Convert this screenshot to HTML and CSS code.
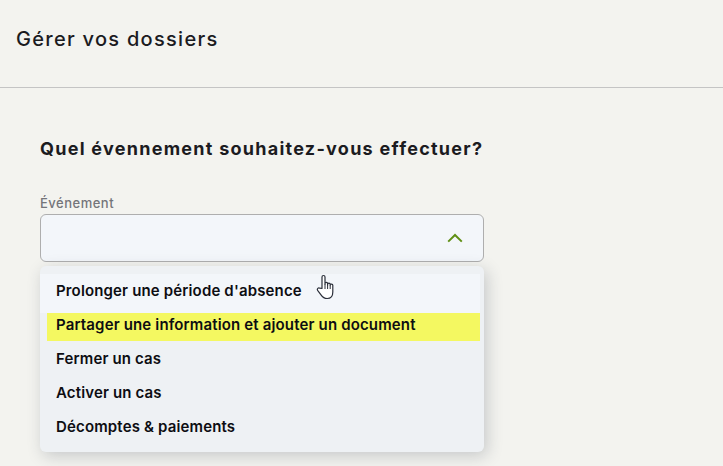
FILE: index.html
```html
<!DOCTYPE html>
<html lang="fr">
<head>
    <meta charset="UTF-8">
    <meta name="viewport" content="width=device-width, initial-scale=1.0">
    <title>Gérer vos dossiers</title>
    <link rel="stylesheet" href="styles.css">
</head>
<body>
    <header class="page-header">
        <h1>Gérer vos dossiers</h1>
    </header>

    <main class="page-content">
        <h2>Quel évennement souhaitez-vous effectuer?</h2>

        <div class="field">
            <label class="field-label">Événement</label>
            <div class="select-box">
                <svg class="chevron" width="16" height="10" viewBox="0 0 16 10">
                    <path d="M1.2 8.6 L8 2 L14.8 8.6" fill="none" stroke="#5f8f14" stroke-width="2"/>
                </svg>
            </div>

            <div class="select-menu">
                <div class="menu-item first">Prolonger une période d'absence</div>
                <div class="menu-item active">Partager une information et ajouter un document</div>
                <div class="menu-item">Fermer un cas</div>
                <div class="menu-item">Activer un cas</div>
                <div class="menu-item">Décomptes &amp; paiements</div>

                <!-- curseur -->
                <svg class="cursor" width="20" height="26" viewBox="0 0 20 26">
                    <path d="M6 14.5 V3 C6 1 9 1 9 3 V10.5 V9.5 C9 8 11.6 8 11.6 9.5 V11 V10.2 C11.6 8.8 14.2 8.8 14.2 10.2 V11.6 V11 C14.2 9.8 16.8 9.8 16.8 11.2 V18 C16.8 22 14.8 24.5 11.2 24.5 C8 24.5 6.6 23.2 5 20.8 L1.6 16.4 C0.6 14.8 2.4 13.2 3.8 14.2 Z" fill="#fff" stroke="#2b2f3a" stroke-width="1.2" stroke-linejoin="round"/>
                    <path d="M9 10.5 V15 M11.6 11 V15 M14.2 11.6 V15" fill="none" stroke="#2b2f3a" stroke-width="1"/>
                </svg>
            </div>
        </div>
    </main>
</body>
</html>
```

FILE: styles.css
```css
* {
    margin: 0;
    padding: 0;
    box-sizing: border-box;
    font-family: 'Inter', 'Liberation Sans', sans-serif;
}

body {
    min-height: 100vh;
    background: #f3f3ef;
    color: #1b1b1f;
    overflow: hidden;
}

.page-header {
    height: 88px;
    padding: 26px 16px 0;
    border-bottom: 1px solid #c4c4c4;
}

.page-header h1 {
    font-size: 20px;
    line-height: 26px;
    font-weight: 500;
    letter-spacing: 1.28px;
}

.page-content {
    padding: 48px 40px 0;
    width: 524px;
}

.page-content h2 {
    font-size: 18px;
    line-height: 26px;
    font-weight: 700;
    letter-spacing: 1.26px;
    margin-bottom: 33px;
}

.field-label {
    display: block;
    font-size: 13px;
    line-height: 16px;
    font-weight: 500;
    letter-spacing: 0.5px;
    color: #74757a;
    margin-bottom: 3px;
}

.select-box {
    height: 48px;
    background: #f3f6fa;
    border: 1px solid #aeaeae;
    border-radius: 6px;
    display: flex;
    align-items: center;
    justify-content: flex-end;
    padding-right: 20px;
}

.select-menu {
    position: relative;
    margin-top: 4px;
    padding: 8px 4px 9px 7px;
    background: #eef1f4;
    border-radius: 6px;
    box-shadow: 3px 4px 16px rgba(40, 50, 70, 0.22);
}

.menu-item {
    padding: 7px 9px 5px;
    font-size: 15px;
    line-height: 22px;
    font-weight: 600;
    letter-spacing: 0.15px;
    color: #0d0d12;
}

.menu-item.first {
    margin-left: -7px;
    padding: 6px 9px 11px 16px;
    background: #f3f6fa;
}

.menu-item.active {
    padding: 1px 9px 5px;
    background: #f4f861;
}

.cursor {
    position: absolute;
    left: 276px;
    top: 8px;
}
```
